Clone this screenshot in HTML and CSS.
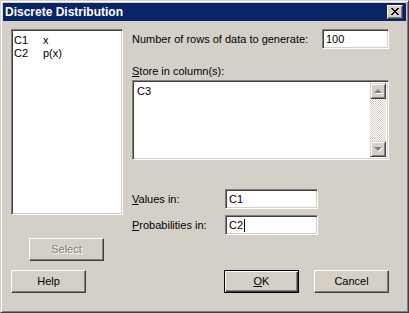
FILE: index.html
```html
<!DOCTYPE html>
<html>
<head>
<meta charset="utf-8">
<link rel="stylesheet" href="styles.css">
</head>
<body>
<div class="window">
  <div class="titlebar">
    <span class="title">Discrete Distribution</span>
    <span class="close"><svg width="8" height="7" viewBox="0 0 8 7"><path d="M0 0h2v1h1v1h2v-1h1v-1h2v1h-1v1h-1v1h-1v1h1v1h1v1h1v1h-2v-1h-1v-1h-2v1h-1v1h-2v-1h1v-1h1v-1h1v-1h-1v-1h-1z" fill="#000"/></svg></span>
  </div>
  <div class="content">
    <div class="main">
      <div class="leftcol">
        <div class="listbox">
          <div class="lrow"><span class="lcol">C1</span><span>x</span></div>
          <div class="lrow"><span class="lcol">C2</span><span>p(x)</span></div>
        </div>
        <div class="btn disabled select">Select</div>
      </div>
      <div class="rightcol">
        <div class="line rowsline">
          <span class="lbl">Number of rows of data to <u>g</u>enerate:</span>
          <div class="field rows">100</div>
        </div>
        <div class="lbl store"><u>S</u>tore in column(s):</div>
        <div class="textarea">
          <div class="ta-text">C3</div>
          <div class="scrollbar">
            <div class="sbtn"><span class="arrow up"></span></div>
            <div class="track"></div>
            <div class="sbtn"><span class="arrow down"></span></div>
          </div>
        </div>
        <div class="line pair first">
          <span class="lbl plabel"><u>V</u>alues in:</span>
          <div class="field small">C1</div>
        </div>
        <div class="line pair">
          <span class="lbl plabel"><u>P</u>robabilities in:</span>
          <div class="field small">C2<span class="caret"></span></div>
        </div>
      </div>
    </div>
    <div class="footer">
      <div class="btn">Help</div>
      <div class="btn default ok"><u>O</u>K</div>
      <div class="btn cancel">Cancel</div>
    </div>
  </div>
</div>
</body>
</html>
```

FILE: styles.css
```css
html, body {
  margin: 0;
  padding: 0;
  background: #d4d0c8;
}
body {
  font-family: "Liberation Sans", Arial, sans-serif;
  font-size: 11px;
  color: #000;
}
u { text-decoration: underline; text-underline-offset: 1px; }
.window {
  width: 409px;
  height: 313px;
  box-sizing: border-box;
  border: 1px solid;
  border-color: #d4d0c8 #404040 #404040 #d4d0c8;
  box-shadow: inset 1px 1px 0 #fff, inset -1px -1px 0 #808080;
  padding: 2px;
  background: #d4d0c8;
}
.titlebar {
  height: 18px;
  background: #0a246a;
  display: flex;
  align-items: center;
  justify-content: space-between;
  padding: 0 3px 0 2px;
}
.title {
  color: #fff;
  font-weight: bold;
  font-size: 12px;
  line-height: 18px;
}
.close {
  width: 16px;
  height: 14px;
  box-sizing: border-box;
  background: #d4d0c8;
  border: 1px solid;
  border-color: #fff #404040 #404040 #fff;
  box-shadow: inset -1px -1px 0 #808080;
  display: flex;
  align-items: center;
  justify-content: center;
  padding: 0 1px 1px 0;
}
.close svg { display: block; }
.content {
  padding: 8px 0 0 8px;
}
.main {
  display: flex;
}
.leftcol {
  width: 112px;
  display: flex;
  flex-direction: column;
}
.listbox {
  height: 186px;
  box-sizing: border-box;
  background: #fff;
  border: 1px solid;
  border-color: #808080 #fff #fff #808080;
  box-shadow: inset 1px 1px 0 #404040, inset -1px -1px 0 #d4d0c8;
  padding: 4px 2px;
  line-height: 13px;
}
.lrow { display: flex; }
.lcol { width: 29px; }
.btn {
  width: 75px;
  height: 23px;
  box-sizing: border-box;
  background: #d4d0c8;
  border: 1px solid;
  border-color: #fff #404040 #404040 #fff;
  box-shadow: inset -1px -1px 0 #808080;
  display: flex;
  align-items: center;
  justify-content: center;
  padding-bottom: 1px;
}
.btn.disabled {
  color: #808080;
  text-shadow: 1px 1px 0 #fff;
}
.select {
  margin: 23px 0 0 18px;
}
.btn.default {
  border: 1px solid #000;
  box-shadow: inset 1px 1px 0 #fff, inset -1px -1px 0 #404040, inset -2px -2px 0 #808080;
}
.rightcol {
  margin-left: 9px;
  width: 257px;
  display: flex;
  flex-direction: column;
}
.line {
  display: flex;
  align-items: center;
}
.lbl { line-height: 13px; }
.field {
  height: 20px;
  box-sizing: border-box;
  background: #fff;
  border: 1px solid;
  border-color: #808080 #fff #fff #808080;
  box-shadow: inset 1px 1px 0 #404040, inset -1px -1px 0 #d4d0c8;
  padding: 0 3px;
  display: flex;
  align-items: center;
}
.rows {
  width: 67px;
  margin-left: auto;
}
.store {
  margin-top: 16px;
}
.textarea {
  margin-top: 2px;
  height: 80px;
  box-sizing: border-box;
  background: #fff;
  border: 1px solid;
  border-color: #808080 #fff #fff #808080;
  box-shadow: inset 1px 1px 0 #404040, inset -1px -1px 0 #d4d0c8;
  padding: 2px;
  display: flex;
}
.ta-text {
  flex: 1;
  padding: 2px 0 0 2px;
  line-height: 13px;
}
.scrollbar {
  width: 16px;
  display: flex;
  flex-direction: column;
}
.sbtn {
  width: 16px;
  height: 16px;
  box-sizing: border-box;
  background: #d4d0c8;
  border: 1px solid;
  border-color: #d4d0c8 #404040 #404040 #d4d0c8;
  box-shadow: inset 1px 1px 0 #fff, inset -1px -1px 0 #808080;
  display: flex;
  align-items: center;
  justify-content: center;
}
.track {
  flex: 1;
  background: repeating-conic-gradient(#d4d0c8 0 25%, #fff 0 50%) 0 0 / 2px 2px;
}
.arrow {
  width: 0;
  height: 0;
  border-left: 4px solid transparent;
  border-right: 4px solid transparent;
  filter: drop-shadow(1px 1px 0 #fff);
}
.arrow.up { border-bottom: 4px solid #808080; }
.arrow.down { border-top: 4px solid #808080; }
.pair.first { margin-top: 29px; }
.pair { margin-top: 6px; }
.plabel { width: 93px; }
.small { width: 93px; }
.caret {
  display: inline-block;
  width: 1px;
  height: 13px;
  background: #000;
  margin-left: 1px;
}
.footer {
  display: flex;
  margin-top: 9px;
}
.ok { margin-left: 138px; }
.cancel { margin-left: 15px; }
```
